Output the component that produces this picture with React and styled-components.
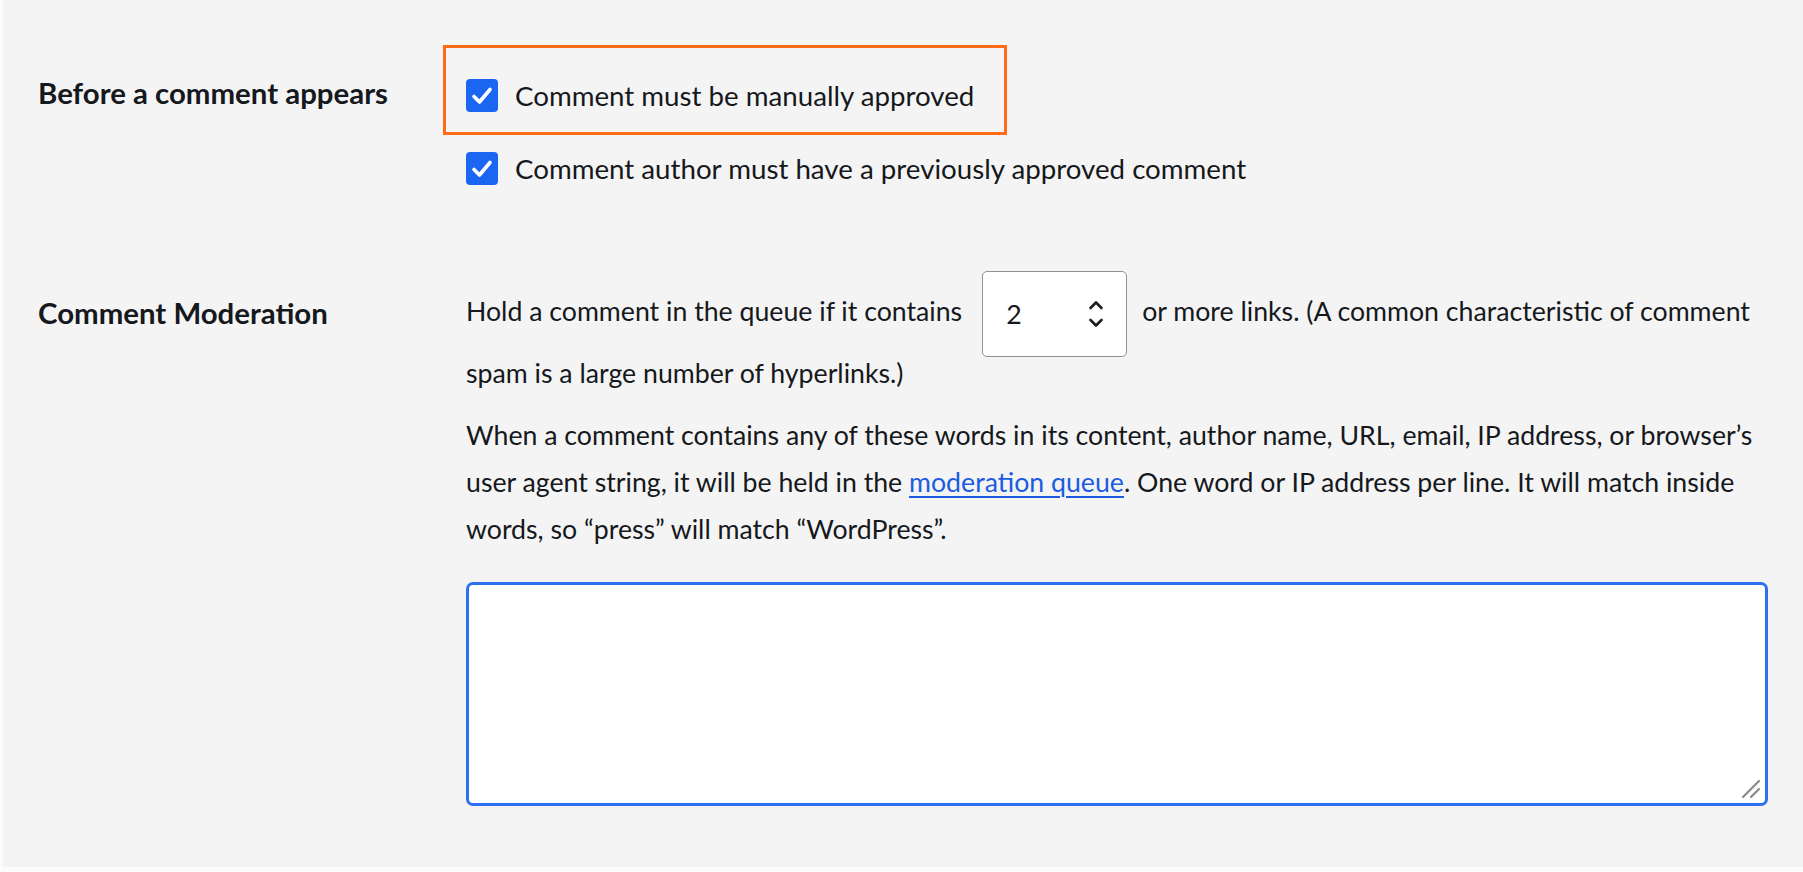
import styled, { createGlobalStyle } from 'styled-components';

const GlobalStyle = createGlobalStyle`
  html, body {
    margin: 0;
    padding: 0;
    background: #fcfcfc;
  }
  body {
    font-family: Lato, "Open Sans", sans-serif;
    color: #15181c;
  }
`;

const Page = styled.main`
  margin-left: 3px;
  height: 867px;
  background: #f4f4f4;
  padding: 79px 0 0 35px;
  box-sizing: border-box;
`;

const Row = styled.section`
  display: grid;
  grid-template-columns: 428px 1305px;
  margin-top: ${(p) => p.$gap || 0}px;
`;

const Label = styled.div`
  font-size: 29.4px;
  font-weight: 700;
  line-height: ${(p) => p.$lh || 33}px;
  margin-top: ${(p) => p.$shift || 0}px;
`;

const Options = styled.fieldset`
  border: 0;
  margin: 0;
  padding: 0;
  display: flex;
  flex-direction: column;
  gap: 40px;
`;

const Option = styled.label`
  position: relative;
  display: flex;
  align-items: center;
  gap: 17px;
  height: 33px;
  font-size: 27.7px;

  ${(p) =>
    p.$highlight &&
    `
    &::before {
      content: '';
      position: absolute;
      left: -23px;
      top: -34px;
      width: 564px;
      height: 90px;
      border: 3px solid #ff6a14;
      box-sizing: border-box;
    }
  `}
`;

const Box = styled.span`
  width: 32px;
  height: 33px;
  border-radius: 4px;
  background: #1a66f2;
  display: inline-flex;
  align-items: center;
  justify-content: center;
  flex-shrink: 0;
`;

const Text = styled.p`
  margin: 0 0 ${(p) => p.$after || 0}px;
  font-size: 26.7px;
  line-height: 47px;
`;

const Link = styled.a`
  color: #1b5ce0;
  text-decoration: underline;
  text-underline-offset: 4px;
  text-decoration-thickness: 2px;
`;

const NumberBox = styled.span`
  display: inline-flex;
  align-items: center;
  justify-content: space-between;
  box-sizing: border-box;
  width: 145px;
  height: 86px;
  margin: -7px 15px -7px 20px;
  padding: 0 22px 0 23px;
  vertical-align: middle;
  background: #fff;
  border: 1.5px solid #8f9297;
  border-radius: 5px;
  font-size: 26.7px;
`;

const Spinner = styled.svg`
  display: block;
`;

const AreaWrap = styled.div`
  position: relative;
  width: 1302px;
  height: 224px;
`;

const Area = styled.textarea`
  display: block;
  width: 100%;
  height: 100%;
  box-sizing: border-box;
  border: 3px solid #2d6ff1;
  border-radius: 7px;
  background: #fff;
  resize: none;
  outline: none;
  font: inherit;
`;

const Grip = styled.svg`
  position: absolute;
  right: 7px;
  bottom: 7px;
  pointer-events: none;
`;

const Check = () => (
  <svg width="22" height="20" viewBox="0 0 22 20">
    <path
      d="M3 10.5 L8.5 16 L19 3.5"
      fill="none"
      stroke="#fff"
      strokeWidth="3.6"
      strokeLinecap="round"
      strokeLinejoin="round"
    />
  </svg>
);

const Checkbox = ({ children, highlight }) => (
  <Option $highlight={highlight}>
    <Box>
      <Check />
    </Box>
    {children}
  </Option>
);

export default function App() {
  return (
    <>
      <GlobalStyle />
      <Page>
        <Row>
          <Label $shift={-3}>Before a comment appears</Label>
          <Options>
            <Checkbox highlight>Comment must be manually approved</Checkbox>
            <Checkbox>Comment author must have a previously approved comment</Checkbox>
          </Options>
        </Row>

        <Row $gap={93}>
          <Label $lh={47} $shift={11}>
            Comment Moderation
          </Label>
          <div>
            <Text $after={15}>
              Hold a comment in the queue if it contains
              <NumberBox>
                2
                <Spinner width="16" height="30" viewBox="0 0 16 30">
                  <path
                    d="M2.5 9 L8 3.5 L13.5 9 M2.5 21 L8 26.5 L13.5 21"
                    fill="none"
                    stroke="#1b1e22"
                    strokeWidth="2.6"
                    strokeLinecap="round"
                    strokeLinejoin="round"
                  />
                </Spinner>
              </NumberBox>
              or more links. (A common characteristic of comment spam is a large
              number of hyperlinks.)
            </Text>
            <Text $after={29}>
              When a comment contains any of these words in its content, author
              name, URL, email, IP address, or browser’s user agent string, it
              will be held in the <Link href="#">moderation queue</Link>. One word
              or IP address per line. It will match inside words, so “press” will
              match “WordPress”.
            </Text>
            <AreaWrap>
              <Area />
              <Grip width="20" height="20" viewBox="0 0 20 20">
                <path
                  d="M2 18 L18 2 M10 18 L18 10"
                  stroke="#8a8a8a"
                  strokeWidth="2.2"
                  strokeLinecap="round"
                />
              </Grip>
            </AreaWrap>
          </div>
        </Row>
      </Page>
    </>
  );
}
